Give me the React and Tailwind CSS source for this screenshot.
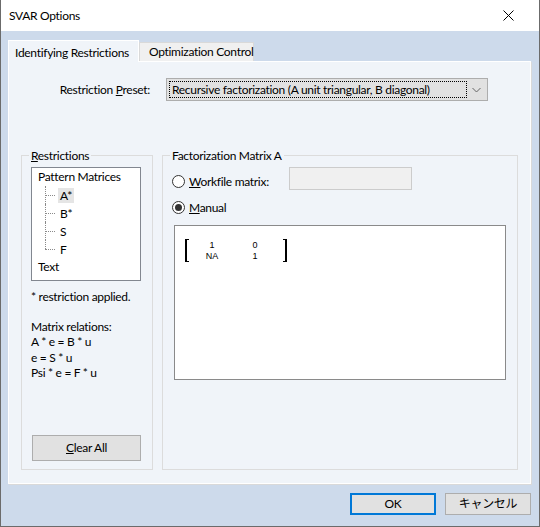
import React from "react";

const font = { fontFamily: 'Lato, "Noto Sans", "Noto Sans CJK JP", sans-serif' };

function Radio({ checked }) {
  return (
    <span className="w-[13px] h-[13px] rounded-full border border-[#333333] bg-white flex items-center justify-center shrink-0">
      {checked && <span className="w-[7px] h-[7px] rounded-full bg-[#333333]" />}
    </span>
  );
}

function TreeChild({ label, selected, last }) {
  return (
    <div className="h-[18px] flex items-center relative">
      <span className="w-[13px] ml-[7px] h-[18px] relative shrink-0">
        <span
          className={
            "absolute left-0 top-0 border-l border-dotted border-[#8a8a8a] " +
            (last ? "h-[9px]" : "h-[18px]")
          }
        />
        <span className="absolute left-0 top-[9px] w-[10px] border-t border-dotted border-[#8a8a8a]" />
      </span>
      <span className={"px-[2px] leading-[15px] " + (selected ? "bg-[#e5e5e5]" : "")}>{label}</span>
    </div>
  );
}

export default function App() {
  return (
    <div
      className="w-[540px] h-[527px] bg-[#cddaeb] border-l border-r border-b border-[#6b6b6b] flex flex-col text-[12px] tracking-[-0.3px] text-black overflow-hidden whitespace-nowrap"
      style={font}
    >
      {/* Title bar */}
      <div className="h-[31px] bg-white flex items-center justify-between pl-[8px] pr-[25px] shrink-0">
        <span className="text-[12px]">SVAR Options</span>
        <svg width="11" height="11" viewBox="0 0 11 11">
          <path d="M0.5 0.5 L10.5 10.5 M10.5 0.5 L0.5 10.5" stroke="#000" strokeWidth="1" />
        </svg>
      </div>

      {/* Body */}
      <div className="pl-[7px] pt-[9px] flex flex-col">
        {/* Tabs */}
        <div className="flex items-end h-[21px] relative z-10">
          <div className="w-[131px] h-[22px] bg-[#f0f4f9] border-t border-l border-r border-white pl-[6px] pt-[3px] self-start -mb-[1px]">
            Identifying Restrictions
          </div>
          <div className="w-[115px] h-[19px] bg-[#f0f0f0] border border-[#d9d9d9] border-b-0 pl-[9px] flex items-center">
            Optimization Control
          </div>
        </div>

        {/* Panel */}
        <div className="w-[523px] h-[423px] bg-[#f0f4f9] border border-white shadow-[1px_1px_0_#d9d9d9] flex flex-col pt-[16px]">
          {/* Preset row */}
          <div className="flex items-center h-[23px]">
            <span className="w-[141px] text-right">
              Restriction <span className="underline">P</span>reset:
            </span>
            <div className="ml-[16px] w-[322px] h-[23px] bg-[#e1e1e1] border border-[#adadad] flex items-center p-[2px]">
              <div className="flex-1 h-full border border-dotted border-black flex items-center pl-[2px] leading-none">
                Recursive factorization (A unit triangular, B diagonal)
              </div>
              <svg width="17" height="17" viewBox="0 0 17 17" className="ml-[1px]">
                <path d="M4.5 7 L8.5 11 L12.5 7" stroke="#666" strokeWidth="1" fill="none" />
              </svg>
            </div>
          </div>

          {/* Groups */}
          <div className="flex mt-[54px] pl-[12px] gap-[9px]">
            {/* Restrictions */}
            <div className="w-[132px] h-[315px] border border-[#dcdcdc] relative flex flex-col pl-[9px] pt-[11px]">
              <span className="absolute -top-[8px] left-[7px] px-[2px] bg-[#f0f4f9] leading-[16px]">
                <span className="underline">R</span>estrictions
              </span>
              <div className="w-[110px] h-[114px] border border-[#828790] bg-white pl-[6px] shrink-0">
                <div className="h-[18px] flex items-center">Pattern Matrices</div>
                <TreeChild label="A*" selected />
                <TreeChild label="B*" />
                <TreeChild label="S" />
                <TreeChild label="F" last />
                <div className="h-[18px] flex items-center">Text</div>
              </div>
              <div className="mt-[8px] leading-[15.5px]">* restriction applied.</div>
              <div className="mt-[14px] leading-[15.5px]">
                <div>Matrix relations:</div>
                <div>A * e = B * u</div>
                <div>e = S * u</div>
                <div>Psi * e = F * u</div>
              </div>
              <div className="mt-auto mb-[8px] ml-[1px] w-[109px] h-[26px] bg-[#e1e1e1] border border-[#adadad] flex items-center justify-center">
                <span><span className="underline">C</span>lear All</span>
              </div>
            </div>

            {/* Factorization Matrix A */}
            <div className="w-[356px] h-[315px] border border-[#dcdcdc] relative flex flex-col pl-[9px] pt-[11px]">
              <span className="absolute -top-[8px] left-[7px] px-[2px] bg-[#f0f4f9] leading-[16px]">
                Factorization Matrix A
              </span>
              <div className="flex items-start h-[23px]">
                <div className="flex items-center gap-[4px] mt-[8px]">
                  <Radio />
                  <span className="leading-none">
                    <span className="underline">W</span>orkfile matrix:
                  </span>
                </div>
                <div className="ml-auto mr-[105px] w-[123px] h-[23px] bg-[#f0f0f0] border border-[#cccccc]" />
              </div>
              <div className="flex items-center gap-[4px] mt-[11px]">
                <Radio checked />
                <span className="leading-none">
                  <span className="underline">M</span>anual
                </span>
              </div>
              <div className="ml-[2px] mt-[11px] w-[332px] h-[155px] bg-white border border-[#8a8a8a] pl-[10px] pt-[13px]">
                <div
                  className="flex items-stretch text-[9px] tracking-normal"
                  style={{ fontFamily: '"Liberation Sans", Arial, sans-serif' }}
                >
                  <span className="w-[4px] border-l-2 border-t border-b border-black h-[23px]" />
                  <div className="flex flex-col pt-[1px] leading-[11px]">
                    <div className="flex">
                      <span className="w-[46px] text-center">1</span>
                      <span className="w-[40px] text-center">0</span>
                    </div>
                    <div className="flex">
                      <span className="w-[46px] text-center">NA</span>
                      <span className="w-[40px] text-center">1</span>
                    </div>
                  </div>
                  <span className="ml-[8px] w-[4px] border-r-2 border-t border-b border-black h-[23px]" />
                </div>
              </div>
            </div>
          </div>
        </div>

        {/* Bottom buttons */}
        <div className="flex justify-end gap-[9px] mt-[9px] pr-[8px]">
          <div className="w-[86px] h-[22px] bg-[#e1e1e1] border-2 border-[#0078d7] flex items-center justify-center">
            OK
          </div>
          <div className="w-[86px] h-[22px] bg-[#e1e1e1] border border-[#adadad] flex items-center justify-center">
            キャンセル
          </div>
        </div>
      </div>
    </div>
  );
}
